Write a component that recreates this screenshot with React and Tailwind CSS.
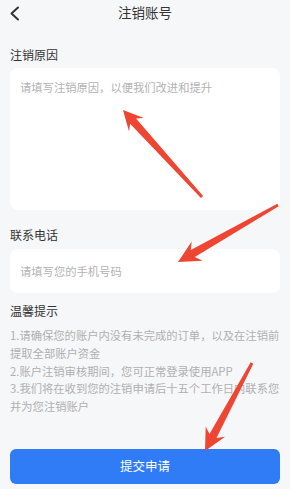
import React from 'react';

// red annotation arrow, built from tip and tail points
function arrowPoints(tip, tail, headLen = 20, headHalf = 10, shaftHalf = 4, tailHalf = 1.5) {
  const dx = tail[0] - tip[0];
  const dy = tail[1] - tip[1];
  const len = Math.hypot(dx, dy);
  const ux = dx / len, uy = dy / len;
  const nx = -uy, ny = ux;
  const at = (d, w) => [tip[0] + ux * d + nx * w, tip[1] + uy * d + ny * w];
  const pts = [
    tip,
    at(headLen, headHalf),
    at(headLen - 5, shaftHalf),
    [tail[0] + nx * tailHalf, tail[1] + ny * tailHalf],
    [tail[0] - nx * tailHalf, tail[1] - ny * tailHalf],
    at(headLen - 5, -shaftHalf),
    at(headLen, -headHalf),
  ];
  return pts.map(p => p[0].toFixed(1) + ',' + p[1].toFixed(1)).join(' ');
}

const tips = [
  '1.请确保您的账户内没有未完成的订单，以及在注销前',
  '提取全部账户资金',
  '2.账户注销审核期间，您可正常登录使用APP',
  '3.我们将在收到您的注销申请后十五个工作日内联系您',
  '并为您注销账户',
];

export default function App() {
  return (
    <div
      className="relative w-[290px] h-[489px] overflow-hidden bg-[#f6f7f9] text-[#333]"
      style={{ fontFamily: '"Noto Sans CJK SC", "Noto Sans", sans-serif' }}
    >
      {/* header */}
      <div className="relative flex h-[26px] items-center justify-center">
        <svg className="absolute left-[9px] top-[6px]" width="12" height="15" viewBox="0 0 12 15">
          <polyline points="9,1.5 2.5,7.5 9,13.5" fill="none" stroke="#333" strokeWidth="2" strokeLinecap="round" strokeLinejoin="round" />
        </svg>
        <span className="text-[13.5px] leading-none">注销账号</span>
      </div>

      <div className="px-[10px]">
        <div className="mt-[21px] text-[12px] leading-[16px]">注销原因</div>
        <div className="mt-[5px] h-[142px] rounded-[8px] bg-white px-[10px] pt-[11px]">
          <div className="text-[11.3px] leading-[16px] text-[#b3b3b3]">请填写注销原因，以便我们改进和提升</div>
        </div>

        <div className="mt-[17px] text-[12px] leading-[16px]">联系电话</div>
        <div className="mt-[6px] flex h-[44px] items-center rounded-[8px] bg-white px-[10px]">
          <span className="text-[11.3px] leading-[16px] text-[#b3b3b3]">请填写您的手机号码</span>
        </div>

        <div className="mt-[10px] text-[12px] leading-[16px]">温馨提示</div>
        <div className="mt-[8px] text-[11.3px] leading-[17.8px] text-[#b0b0b0]">
          {tips.map((t, i) => (
            <div key={i} className="whitespace-nowrap">{t}</div>
          ))}
        </div>

        <button className="mt-[33px] flex h-[35px] w-full items-center justify-center rounded-[6px] bg-[#2f7cf6] text-[12.5px] text-white">
          提交申请
        </button>
      </div>

      {/* annotation arrows */}
      <svg className="pointer-events-none absolute left-0 top-0" width="290" height="489">
        <polygon points={arrowPoints([123, 110], [202, 197])} fill="#ee4632" strokeLinejoin="round" />
        <polygon points={arrowPoints([178, 262], [278, 205], 22, 11, 4)} fill="#ee4632" />
        <polygon points={arrowPoints([205, 451], [252, 363], 22, 11, 4)} fill="#ee4632" />
      </svg>
    </div>
  );
}
